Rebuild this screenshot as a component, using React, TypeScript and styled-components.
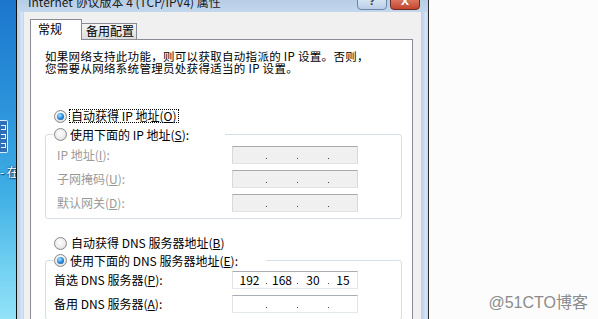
import styled, { createGlobalStyle } from "styled-components";

const GlobalStyle = createGlobalStyle`
  html, body {
    margin: 0;
    padding: 0;
    overflow: hidden;
    background: #fcfcfc;
  }
  body {
    font-family: "Noto Sans CJK SC", "Liberation Sans", sans-serif;
    font-size: 12px;
    color: #000;
  }
`;

const Screen = styled.div`
  width: 598px;
  height: 319px;
  display: flex;
  overflow: hidden;
`;

const Desktop = styled.div`
  width: 16px;
  flex: 0 0 16px;
  display: flex;
  flex-direction: column;
  overflow: hidden;
  background: linear-gradient(180deg, #1b76cc 0%, #2a90da 30%, #3eaee4 60%, #74d2f2 85%, #93e2f8 100%);
`;

const DesktopIcon = styled.div`
  margin-top: 120px;
  width: 8px;
  height: 33px;
  box-sizing: border-box;
  border: 1px solid #d7ecff;
  border-left: none;
  border-radius: 0 2px 2px 0;
  background: #2f6fb8;
  display: flex;
  flex-direction: column;
  justify-content: center;
  gap: 4px;
  padding-left: 1px;
`;

const IconMark = styled.span`
  width: 4px;
  height: 3px;
  border: 1px solid #e8f4ff;
  border-left: none;
`;

const DesktopLabel = styled.span`
  margin-top: 12px;
  font-size: 12px;
  line-height: 13px;
  color: #fff;
  white-space: nowrap;
  text-shadow: 0 0 2px #0a3a66, 1px 1px 1px #0a3a66;
`;

const Window = styled.div`
  width: 411px;
  flex: 0 0 411px;
  display: flex;
  flex-direction: column;
  border-left: 1px solid #0c0c0c;
  border-right: 1px solid #2c2c2c;
`;

const TitleBar = styled.div`
  height: 12px;
  flex: 0 0 12px;
  display: flex;
  align-items: flex-start;
  justify-content: space-between;
  background: linear-gradient(180deg, #b7cde6, #c3d7ec);
  overflow: hidden;
`;

const TitleText = styled.span`
  margin: -4px 0 0 11px;
  line-height: 12px;
  font-size: 12px;
  color: #1a1a1a;
  white-space: nowrap;
`;

const CaptionButtons = styled.div`
  display: flex;
  gap: 3px;
  margin-right: 8px;
`;

const CaptionButton = styled.div<{ $close?: boolean }>`
  box-sizing: border-box;
  width: 30px;
  height: 18px;
  margin-top: -8px;
  border: 1px solid ${(p) => (p.$close ? "#6e2a20" : "#6f86a8")};
  border-radius: 0 0 4px 4px;
  background: ${(p) =>
    p.$close
      ? "linear-gradient(180deg, #e8a08f 0%, #d86c55 55%, #c4452c 100%)"
      : "linear-gradient(180deg, #e6eef8 0%, #cfdff0 55%, #b9cde6 100%)"};
  display: flex;
  justify-content: center;
  align-items: flex-end;
  font-family: "DejaVu Sans", sans-serif;
  font-weight: bold;
  font-size: 11px;
  line-height: 14px;
  color: ${(p) => (p.$close ? "#fff" : "#3a4a60")};
  text-shadow: ${(p) => (p.$close ? "0 0 1px #7a1e10" : "0 0 1px #fff")};
`;

const Frame = styled.div`
  flex: 1;
  display: flex;
  min-height: 0;
`;

const FrameSide = styled.div`
  width: 7px;
  flex: 0 0 7px;
  background: linear-gradient(90deg, #b9d0ea 0%, #c8dbef 45%, #d9e7f6 70%, #bed3ea 100%);
`;

const Client = styled.div`
  flex: 1;
  display: flex;
  flex-direction: column;
  padding: 7px 8px 0 6px;
  background: #f0f0f0;
  overflow: hidden;
`;

const Tabs = styled.div`
  display: flex;
  align-items: flex-end;
  height: 21px;
  flex: 0 0 21px;
`;

const Tab = styled.div<{ $active?: boolean; $width: number; $pad: number }>`
  box-sizing: border-box;
  width: ${(p) => p.$width}px;
  height: ${(p) => (p.$active ? 21 : 17)}px;
  padding: ${(p) => (p.$active ? 3 : 1)}px 0 0 ${(p) => p.$pad}px;
  border: 1px solid #898c95;
  border-bottom: none;
  ${(p) => (p.$active ? "" : "border-left: none;")}
  background: ${(p) =>
    p.$active ? "#fff" : "linear-gradient(180deg, #f4f4f4 0%, #e9e9e9 50%, #dbdbdb 100%)"};
  line-height: 12px;
  white-space: nowrap;
  ${(p) => (p.$active ? "position: relative; z-index: 1;" : "")}
`;

const Panel = styled.div`
  margin-top: -1px;
  border: 1px solid #898c95;
  background: #fff;
  padding-bottom: 40px;
`;

const Intro = styled.p`
  margin: 10px 0 0 14px;
  font-size: 11.5px;
  line-height: 12px;
  letter-spacing: 0.3px;
  white-space: nowrap;
`;

const RadioRow = styled.div<{ $top: number }>`
  display: flex;
  align-items: center;
  gap: 2px;
  margin: ${(p) => p.$top}px 0 0 23px;
  height: 14px;
`;

const Radio = styled.span<{ $checked?: boolean }>`
  box-sizing: border-box;
  flex: 0 0 13px;
  width: 13px;
  height: 13px;
  border-radius: 50%;
  border: 1px solid #8a8a8a;
  background: radial-gradient(circle at 45% 40%, #ffffff 0%, #ececec 55%, #c9c9c9 100%);
  display: flex;
  align-items: center;
  justify-content: center;
  &::after {
    content: "";
    display: ${(p) => (p.$checked ? "block" : "none")};
    width: 7px;
    height: 7px;
    border-radius: 50%;
    background: radial-gradient(circle at 40% 35%, #b6e6ff 0%, #3a9ce6 40%, #0a3f88 100%);
  }
`;

const RadioLabel = styled.span<{ $focused?: boolean }>`
  line-height: 12px;
  padding: 0 1px;
  border: 1px dotted ${(p) => (p.$focused ? "#000" : "transparent")};
  white-space: nowrap;
`;

const Group = styled.div<{ $top: number }>`
  margin: ${(p) => p.$top}px 0 0 14px;
  width: 357px;
  box-sizing: border-box;
  border: 1px solid #d5dfe5;
  border-radius: 3px;
  padding-bottom: 6px;
`;

const Legend = styled.div<{ $width: number }>`
  display: flex;
  align-items: center;
  gap: 3px;
  box-sizing: border-box;
  width: ${(p) => p.$width}px;
  height: 13px;
  margin: -7px 0 0 8px;
  background: #fff;
  line-height: 12px;
  white-space: nowrap;
`;

const Fields = styled.div<{ $top: number }>`
  display: flex;
  flex-direction: column;
  gap: 6px;
  margin-top: ${(p) => p.$top}px;
`;

const FieldRow = styled.div<{ $indent: number }>`
  display: flex;
  align-items: center;
  padding: 0 43px 0 ${(p) => p.$indent}px;
`;

const FieldLabel = styled.span<{ $disabled?: boolean }>`
  flex: 1;
  line-height: 12px;
  color: ${(p) => (p.$disabled ? "#9a9a9a" : "#000")};
  white-space: nowrap;
`;

const IpBox = styled.div<{ $disabled?: boolean }>`
  box-sizing: border-box;
  width: 126px;
  height: 18px;
  display: flex;
  border: 1px solid ${(p) => (p.$disabled ? "#d6d9dc" : "#e2e3ea")};
  border-top-color: ${(p) => (p.$disabled ? "#a9abae" : "#abadb3")};
  border-bottom-color: ${(p) => (p.$disabled ? "#e3e3e3" : "#e3e9ef")};
  background: ${(p) => (p.$disabled ? "#f0f0f0" : "#fff")};
`;

const IpCell = styled.span<{ $width: number }>`
  width: ${(p) => p.$width}px;
  flex: 0 0 ${(p) => p.$width}px;
  text-align: center;
  line-height: 16px;
  font-size: 12px;
  color: #000;
`;

const IpDot = styled.span`
  flex: 0 0 1px;
  width: 1px;
  height: 1px;
  align-self: flex-end;
  margin-bottom: 4px;
  background: #4a4a4a;
`;

const Backdrop = styled.div`
  flex: 1;
  background: #fcfcfc;
  display: flex;
  flex-direction: column;
  justify-content: flex-end;
  align-items: flex-end;
  padding: 0 10px 8px 0;
`;

const Watermark = styled.span`
  font-family: "Liberation Sans", "Noto Sans CJK SC", sans-serif;
  font-size: 16px;
  line-height: 16px;
  color: #8a8a8a;
  text-shadow: 0 0 2px #ffffff;
  white-space: nowrap;
`;

const cellWidths = [33, 30, 30, 28];

const IpField = ({ value, disabled }: { value?: string[]; disabled?: boolean }) => (
  <IpBox $disabled={disabled}>
    {cellWidths.map((w, i) => [
      i > 0 ? <IpDot key={`d${i}`} /> : null,
      <IpCell key={`c${i}`} $width={w}>
        {value ? value[i] : ""}
      </IpCell>,
    ])}
  </IpBox>
);

const App = () => {
  return (
    <>
      <GlobalStyle />
      <Screen>
        <Desktop>
          <DesktopIcon>
            <IconMark />
            <IconMark />
            <IconMark />
          </DesktopIcon>
          <DesktopLabel>- 在</DesktopLabel>
        </Desktop>
        <Window>
          <TitleBar>
            <TitleText>Internet 协议版本 4 (TCP/IPV4) 属性</TitleText>
            <CaptionButtons>
              <CaptionButton>?</CaptionButton>
              <CaptionButton $close>X</CaptionButton>
            </CaptionButtons>
          </TitleBar>
          <Frame>
            <FrameSide />
            <Client>
              <Tabs>
                <Tab $active $width={52} $pad={7}>常规</Tab>
                <Tab $width={55} $pad={4}>备用配置</Tab>
              </Tabs>
              <Panel>
                <Intro>
                  如果网络支持此功能，则可以获取自动指派的 IP 设置。否则，
                  <br />
                  您需要从网络系统管理员处获得适当的 IP 设置。
                </Intro>

                <RadioRow $top={35}>
                  <Radio $checked />
                  <RadioLabel $focused>
                    自动获得 IP 地址(<u>O</u>)
                  </RadioLabel>
                </RadioRow>

                <Group $top={11}>
                  <Legend $width={171}>
                    <Radio />
                    <span>
                      使用下面的 IP 地址(<u>S</u>):
                    </span>
                  </Legend>
                  <Fields $top={5}>
                    <FieldRow $indent={11}>
                      <FieldLabel $disabled>
                        IP 地址(<u>I</u>):
                      </FieldLabel>
                      <IpField disabled />
                    </FieldRow>
                    <FieldRow $indent={11}>
                      <FieldLabel $disabled>
                        子网掩码(<u>U</u>):
                      </FieldLabel>
                      <IpField disabled />
                    </FieldRow>
                    <FieldRow $indent={11}>
                      <FieldLabel $disabled>
                        默认网关(<u>D</u>):
                      </FieldLabel>
                      <IpField disabled />
                    </FieldRow>
                  </Fields>
                </Group>

                <RadioRow $top={17}>
                  <Radio />
                  <RadioLabel>
                    自动获得 DNS 服务器地址(<u>B</u>)
                  </RadioLabel>
                </RadioRow>

                <Group $top={10}>
                  <Legend $width={212}>
                    <Radio $checked />
                    <span>
                      使用下面的 DNS 服务器地址(<u>E</u>):
                    </span>
                  </Legend>
                  <Fields $top={4}>
                    <FieldRow $indent={8}>
                      <FieldLabel>
                        首选 DNS 服务器(<u>P</u>):
                      </FieldLabel>
                      <IpField value={["192", "168", "30", "15"]} />
                    </FieldRow>
                    <FieldRow $indent={8}>
                      <FieldLabel>
                        备用 DNS 服务器(<u>A</u>):
                      </FieldLabel>
                      <IpField />
                    </FieldRow>
                  </Fields>
                </Group>
              </Panel>
            </Client>
            <FrameSide />
          </Frame>
        </Window>
        <Backdrop>
          <Watermark>@51CTO博客</Watermark>
        </Backdrop>
      </Screen>
    </>
  );
};

export default App;
